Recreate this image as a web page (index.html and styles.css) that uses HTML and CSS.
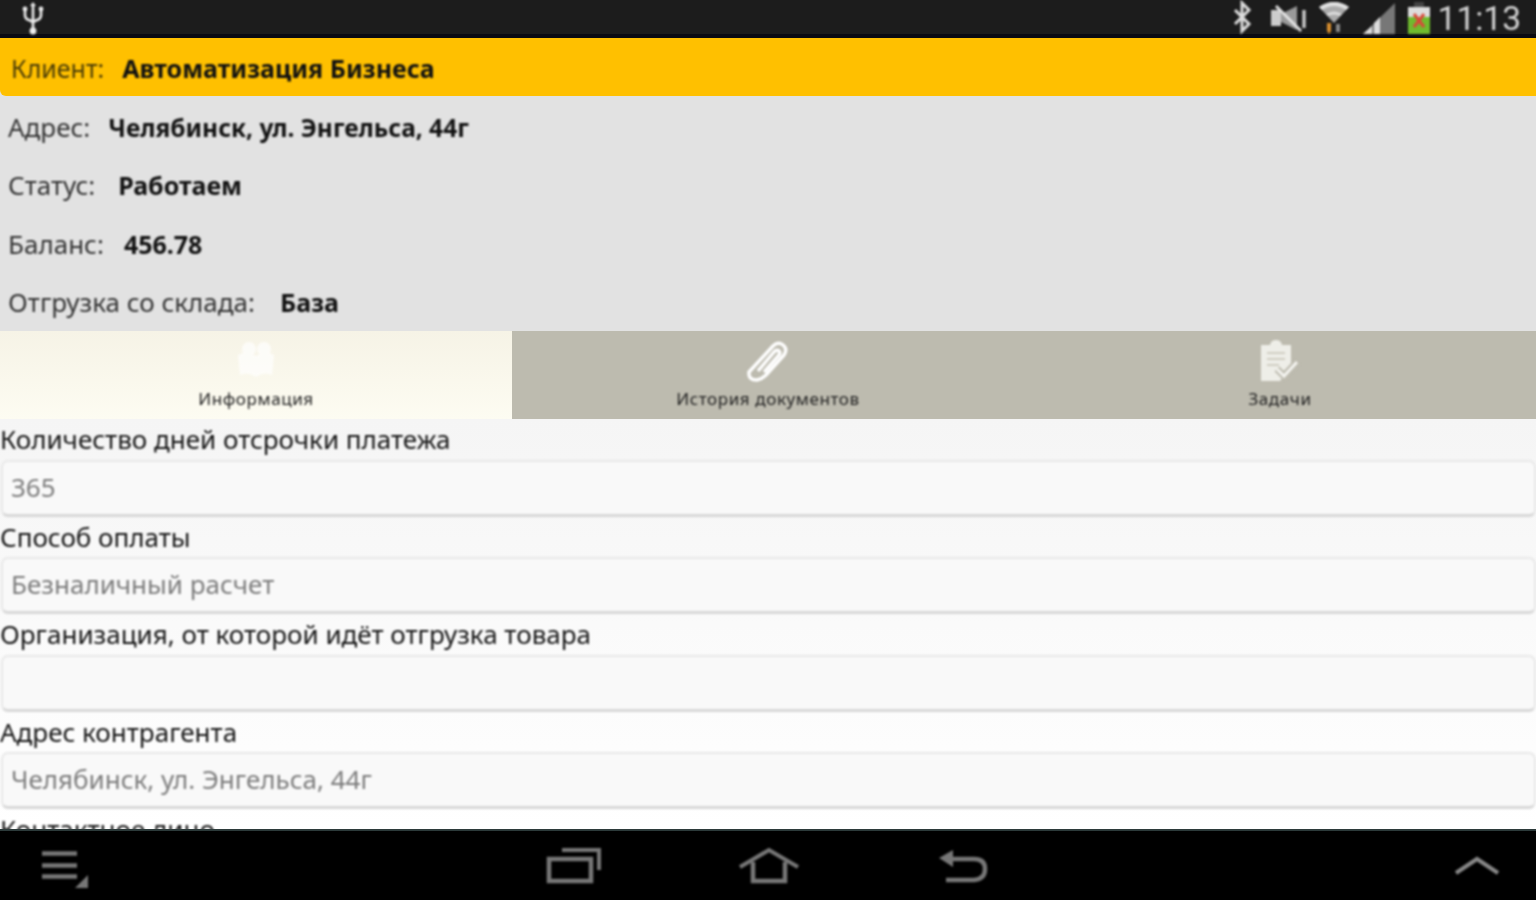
FILE: index.html
```html
<!DOCTYPE html>
<html lang="ru">
<head>
  <meta charset="UTF-8" />
  <meta name="viewport" content="width=device-width, initial-scale=1.0" />
  <title>Клиент</title>
  <link rel="stylesheet" href="styles.css">
</head>
<body>
  <div class="status-bar">
    <svg class="usb-icon" width="30" height="36" viewBox="0 0 30 36">
      <path d="M15 6V33M7 11v5q0 4 4 5l4 2 4-2q4-1 4-5v-5" fill="none" stroke="#eee" stroke-width="2.6"/>
      <circle cx="15" cy="32" r="3.4" fill="#eee"/>
      <circle cx="7" cy="10" r="2.4" fill="#eee"/>
      <circle cx="23" cy="10" r="2.4" fill="#eee"/>
      <path d="M12 7l3-4 3 4z" fill="#eee"/>
    </svg>
    <div class="status-right">
      <svg width="22" height="34" viewBox="0 0 22 34">
        <path d="M4 10l14 14-7 7V3l7 7L4 24" fill="none" stroke="#ddd" stroke-width="3"/>
      </svg>
      <svg class="mute-icon" width="40" height="30" viewBox="0 0 40 30">
        <path d="M1 8h10v16H1z" fill="#ccc"/>
        <path d="M11 12L27 4v24L11 20z" fill="#999"/>
        <path d="M6 4l25 25" fill="none" stroke="#e4e4e4" stroke-width="2.8"/>
        <path d="M34 8v18" fill="none" stroke="#ccc" stroke-width="3.4"/>
      </svg>
      <svg class="wifi-icon" width="32" height="36" viewBox="0 0 32 36">
        <path d="M1 8q15-10 30 0L16 24z" fill="#aaa"/>
        <path d="M1 8q15-10 30 0l-3 3q-12-8-24 0z" fill="#e2e2e2"/>
        <path d="M8 15q8-5 16 0l-2 2q-6-3-12 0z" fill="#dcdcdc"/>
        <path d="M9 24h4v8l-2 3-2-3z" fill="#d98f2e"/>
        <path d="M18 25h4v8h-4z" fill="#888"/>
      </svg>
      <svg class="signal-icon" width="36" height="36" viewBox="0 0 36 36">
        <path d="M1 35L33 4v31z" fill="#777"/>
        <path d="M1 35l9-8v8zM12 35V24l6-6v17z" fill="#ddd"/>
      </svg>
      <svg class="battery-icon" width="26" height="36" viewBox="0 0 26 36">
        <path d="M8 3h10v5H8z" fill="#444"/>
        <path d="M2 8h22v10H2z" fill="#ddd"/>
        <path d="M2 18h22v17H2z" fill="#6fbb2e"/>
        <path d="M8 15l10 13M18 15L8 28" stroke="#d9483a" stroke-width="3"/>
      </svg>
      <span class="clock">11:13</span>
    </div>
  </div>

  <div class="client-row">
    <span class="caption">Клиент:</span>
    <b>Автоматизация Бизнеса</b>
  </div>

  <div class="info">
    <div class="info-row row-address"><span class="caption">Адрес:</span><b class="address-value">Челябинск, ул. Энгельса, 44г</b></div>
    <div class="info-row row-status"><span class="caption">Статус:</span><b>Работаем</b></div>
    <div class="info-row row-balance"><span class="caption">Баланс:</span><b>456.78</b></div>
    <div class="info-row row-stock"><span class="caption">Отгрузка со склада:</span><b>База</b></div>
  </div>

  <div class="tabs">
    <div class="tab tab-active">
      <svg width="44" height="42" viewBox="0 0 44 42">
        <path d="M4 16q9-5 18 1q9-6 18-1l-2 20q-8-4-16 2q-8-6-16-2z" fill="#fff"/>
        <circle cx="15" cy="10" r="7" fill="#fff"/>
        <circle cx="30" cy="10" r="7" fill="#fff"/>
      </svg>
      <span>Информация</span>
    </div>
    <div class="tab">
      <svg width="48" height="44" viewBox="0 0 48 44">
        <path d="M5 33L29 7q5-5 10-1t1 10L22 36q-4 4-9 5-9 0-8-8zM14 32l16-19q3-3 5-1t-1 5L20 33" fill="none" stroke="#fff" stroke-width="3.4" stroke-linejoin="round"/>
      </svg>
      <span>История документов</span>
    </div>
    <div class="tab">
      <svg width="44" height="44" viewBox="0 0 44 44">
        <path d="M3 6h9q1-5 6-5t6 5h9v20l-11 16H3z" fill="#eeeee8"/>
        <path d="M9 14h18M9 20h18M9 26h12" stroke="#cfcdc2" stroke-width="2"/>
        <path d="M19 30l7 7 13-14" fill="none" stroke="#bdbbaf" stroke-width="7"/>
        <path d="M19 30l7 7 13-14" fill="none" stroke="#f4f4f0" stroke-width="3"/>
      </svg>
      <span>Задачи</span>
    </div>
  </div>

  <div class="form">
    <label class="field-label">Количество дней отсрочки платежа</label>
    <div class="field">365</div>
    <label class="field-label">Способ оплаты</label>
    <div class="field">Безналичный расчет</div>
    <label class="field-label">Организация, от которой идёт отгрузка товара</label>
    <div class="field"></div>
    <label class="field-label">Адрес контрагента</label>
    <div class="field">Челябинск, ул. Энгельса, 44г</div>
    <label class="field-label">Контактное лицо</label>
  </div>

  <div class="nav-bar">
    <svg width="48" height="44" viewBox="0 0 48 44">
      <path d="M1 9.5h35M1 21.5h35M1 32.500h35" stroke="#777" stroke-width="4.500"/>
      <path d="M47 31v13H34z" fill="#777"/>
    </svg>
    <div class="nav-center">
      <svg width="56" height="38" viewBox="0 0 56 38">
        <path d="M16 3h37v20" fill="none" stroke="#777" stroke-width="4"/>
        <path d="M3 12h42v22H3z" fill="none" stroke="#777" stroke-width="4.500"/>
      </svg>
      <svg width="62" height="38" viewBox="0 0 62 38">
        <path d="M2 20L31 3l29 17" fill="none" stroke="#777" stroke-width="4"/>
        <path d="M15 15v19h32V15" fill="none" stroke="#777" stroke-width="4.500"/>
      </svg>
      <svg class="back-icon" width="50" height="38" viewBox="0 0 50 38">
        <path d="M14 12h22q11 0 11 10t-11 11H8" fill="none" stroke="#777" stroke-width="4.500"/>
        <path d="M1 11L15 3v17z" fill="#777"/>
      </svg>
    </div>
    <svg class="up-icon" width="46" height="20" viewBox="0 0 46 20">
      <path d="M2 17L23 3l21 14" fill="none" stroke="#888" stroke-width="4"/>
    </svg>
  </div>
</body>
</html>
```

FILE: styles.css
```css
* {
  box-sizing: border-box;
}

html, body {
  margin: 0;
  padding: 0;
  height: 100%;
  width: 100%;
  overflow: hidden;
}

body {
  display: flex;
  flex-direction: column;
  font-family: 'Noto Sans', Roboto, sans-serif;
  font-size: 26px;
  color: #222;
  background: #e2e2e2;
}

b {
  font-size: 25px;
  font-weight: 700;
  color: #111;
}

svg {
  display: block;
  flex-shrink: 0;
  filter: blur(0.8px);
}

.status-bar {
  height: 38px;
  flex-shrink: 0;
  display: flex;
  align-items: center;
  justify-content: space-between;
  padding: 0 15px 0 18px;
  background: #1c1c1c;
  border-bottom: 4px solid #0a0a12;
}

.status-right {
  display: flex;
  align-items: center;
}

.mute-icon {
  margin-left: 17px;
}

.wifi-icon {
  margin-left: 8px;
}

.signal-icon {
  margin-left: 12px;
}

.battery-icon {
  margin-left: 8px;
}

.clock {
  margin: 4px 0 0 6px;
  font-family: Roboto, sans-serif;
  font-size: 33.500px;
  line-height: 30px;
  color: #d4d4d4;
  filter: blur(0.8px);
}

.client-row {
  height: 58px;
  flex-shrink: 0;
  display: flex;
  align-items: center;
  gap: 18px;
  padding: 2px 0 0 11px;
  background: #ffc000;
  border-radius: 0 0 0 6px;
}

.client-row .caption {
  font-size: 25px;
  color: #4a3c08;
}

.client-row span, .client-row b, .info-row span, .info-row b, .tab span, .field-label, .field {
  filter: blur(0.8px);
}

.info {
  height: 235px;
  flex-shrink: 0;
  display: flex;
  flex-direction: column;
  padding-top: 2px;
  background: #e2e2e2;
}

.info-row {
  flex: 1;
  display: flex;
  align-items: center;
  padding-left: 8px;
}

.info-row .caption {
  color: #333;
}

.row-address {
  gap: 18px;
}

.row-status {
  gap: 23px;
}

.row-balance {
  gap: 20px;
}

.row-stock {
  gap: 25px;
}

.address-value {
  font-size: 24.500px;
}

.tabs {
  height: 88px;
  flex-shrink: 0;
  display: grid;
  grid-template-columns: repeat(3, 1fr);
  background: #bdbbaf;
}

.tab {
  display: flex;
  flex-direction: column;
  align-items: center;
  padding-top: 8px;
  font-size: 17px;
  letter-spacing: 0.6px;
  color: #222;
}

.tab span {
  margin-top: auto;
  margin-bottom: 10px;
  line-height: 20px;
}

.tab-active {
  background: linear-gradient(#f6f3e6, #fdfcf2);
}

.tab-active svg {
  opacity: 0.7;
}

.form {
  flex: 1;
  min-height: 0;
  overflow: hidden;
  display: flex;
  flex-direction: column;
  background: linear-gradient(#f5f5f5, #fff);
}

.field-label {
  height: 40.500px;
  flex-shrink: 0;
  display: flex;
  align-items: center;
  line-height: 30px;
  color: #151515;
}

.field {
  height: 57px;
  flex-shrink: 0;
  display: flex;
  align-items: center;
  margin: 0 0 0 1px;
  padding: 0 0 2px 8px;
  color: #7c7c7c;
  background: #f9f9f9;
  border: 2px solid #e8e8e8;
  border-bottom: 3px solid #d8d8d8;
  border-radius: 7px;
}

.nav-bar {
  height: 71px;
  flex-shrink: 0;
  display: flex;
  align-items: center;
  padding: 0 36px 0 41px;
  background: #000;
  border-top: 2px solid #2c3a3a;
}

.nav-center {
  display: flex;
  align-items: center;
  gap: 136px;
  margin-left: 457px;
}

.back-icon {
  margin-left: 2px;
}

.up-icon {
  margin-left: auto;
}
```
